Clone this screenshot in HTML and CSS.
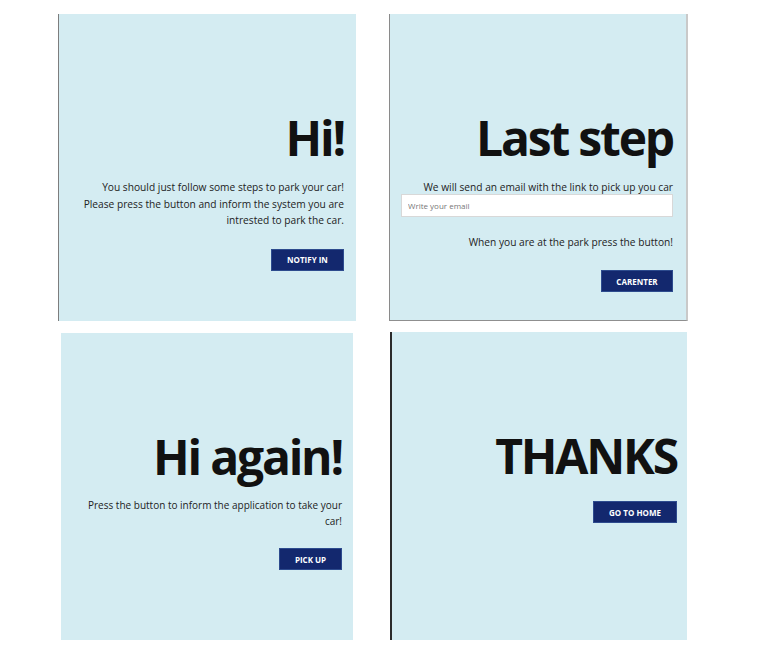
FILE: index.html
```html
<!DOCTYPE html>
<html lang="en">
<head>
<meta charset="utf-8">
<title>Park your car</title>
<link rel="stylesheet" href="styles.css">
</head>
<body>
<main class="grid">
  <section class="panel panel-hi">
    <h1 class="title">Hi!</h1>
    <p class="text text-hi">You should just follow some steps to park your car! Please press the button and inform the system you are intrested to park the car.</p>
    <button class="btn btn-notify">NOTIFY IN</button>
  </section>
  <section class="panel panel-last">
    <h1 class="title">Last step</h1>
    <p class="text text-send">We will send an email with the link to pick up you car</p>
    <input class="email" type="text" placeholder="Write your email">
    <p class="text text-park">When you are at the park press the button!</p>
    <button class="btn btn-carenter">CARENTER</button>
  </section>
  <section class="panel panel-again">
    <h1 class="title">Hi again!</h1>
    <p class="text text-again">Press the button to inform the application to take your car!</p>
    <button class="btn btn-pick">PICK UP</button>
  </section>
  <section class="panel panel-thanks">
    <h1 class="title">THANKS</h1>
    <button class="btn btn-home">GO TO HOME</button>
  </section>
</main>
</body>
</html>
```
FILE: styles.css
```css
* { box-sizing: border-box; }
body {
  margin: 0;
  background: #fff;
  font-family: "Open Sans", "Noto Sans", sans-serif;
}
.grid {
  display: grid;
  grid-template-columns: 298px 299px;
  grid-template-rows: 307px 308px;
  column-gap: 33px;
  row-gap: 11px;
  padding: 14px 0 0 58px;
}
.panel {
  background: #d4ecf2;
  display: flex;
  flex-direction: column;
  align-items: flex-end;
  padding: 97px 12px 0 20px;
}
.panel-hi { border-left: 1px solid #7d7d7d; }
.panel-last {
  border-left: 1px solid #8a8a8a;
  border-bottom: 1px solid #8f8f8f;
  border-right: 2px solid #c9c9c9;
  padding-right: 13px;
  padding-left: 11px;
}
.panel-again {
  margin: 1px 3px 0 3px;
  padding-right: 11px;
}
.panel-thanks {
  margin-left: 1px;
  margin-right: 1px;
  border-left: 2px solid #2b2b2b;
  padding-right: 10px;
}
.title {
  margin: 0;
  font-size: 48px;
  line-height: 54px;
  font-weight: 700;
  color: #111;
  letter-spacing: -2.2px;
}
.text {
  margin: 0;
  font-size: 10.2px;
  line-height: 16.5px;
  color: #222;
  text-align: right;
}
.text-hi { margin-top: 14px; max-width: 275px; }
.text-send { margin-top: 14px; }
.text-park { margin-top: 17px; }
.text-again { margin-top: 14px; max-width: 262px; line-height: 15.5px; font-size: 10px; }
.email {
  width: 100%;
  height: 23px;
  margin-top: -2px;
  border: 1px solid #d8d8d8;
  background: #fff;
  padding: 0 6px;
  font-family: inherit;
  font-size: 8px;
  color: #333;
  outline: none;
}
.email::placeholder { color: #777; }
.btn {
  height: 22px;
  border: 1px solid #2d4b8e;
  background: #13286e;
  color: #fff;
  font-family: inherit;
  font-weight: 700;
  font-size: 8px;
  padding: 0;
  cursor: pointer;
}
.btn-notify { width: 73px; margin-top: 20px; }
.btn-carenter { width: 72px; margin-top: 20px; }
.btn-pick { width: 63px; margin-top: 19px; }
.btn-home { width: 84px; margin-top: 18px; }
```
